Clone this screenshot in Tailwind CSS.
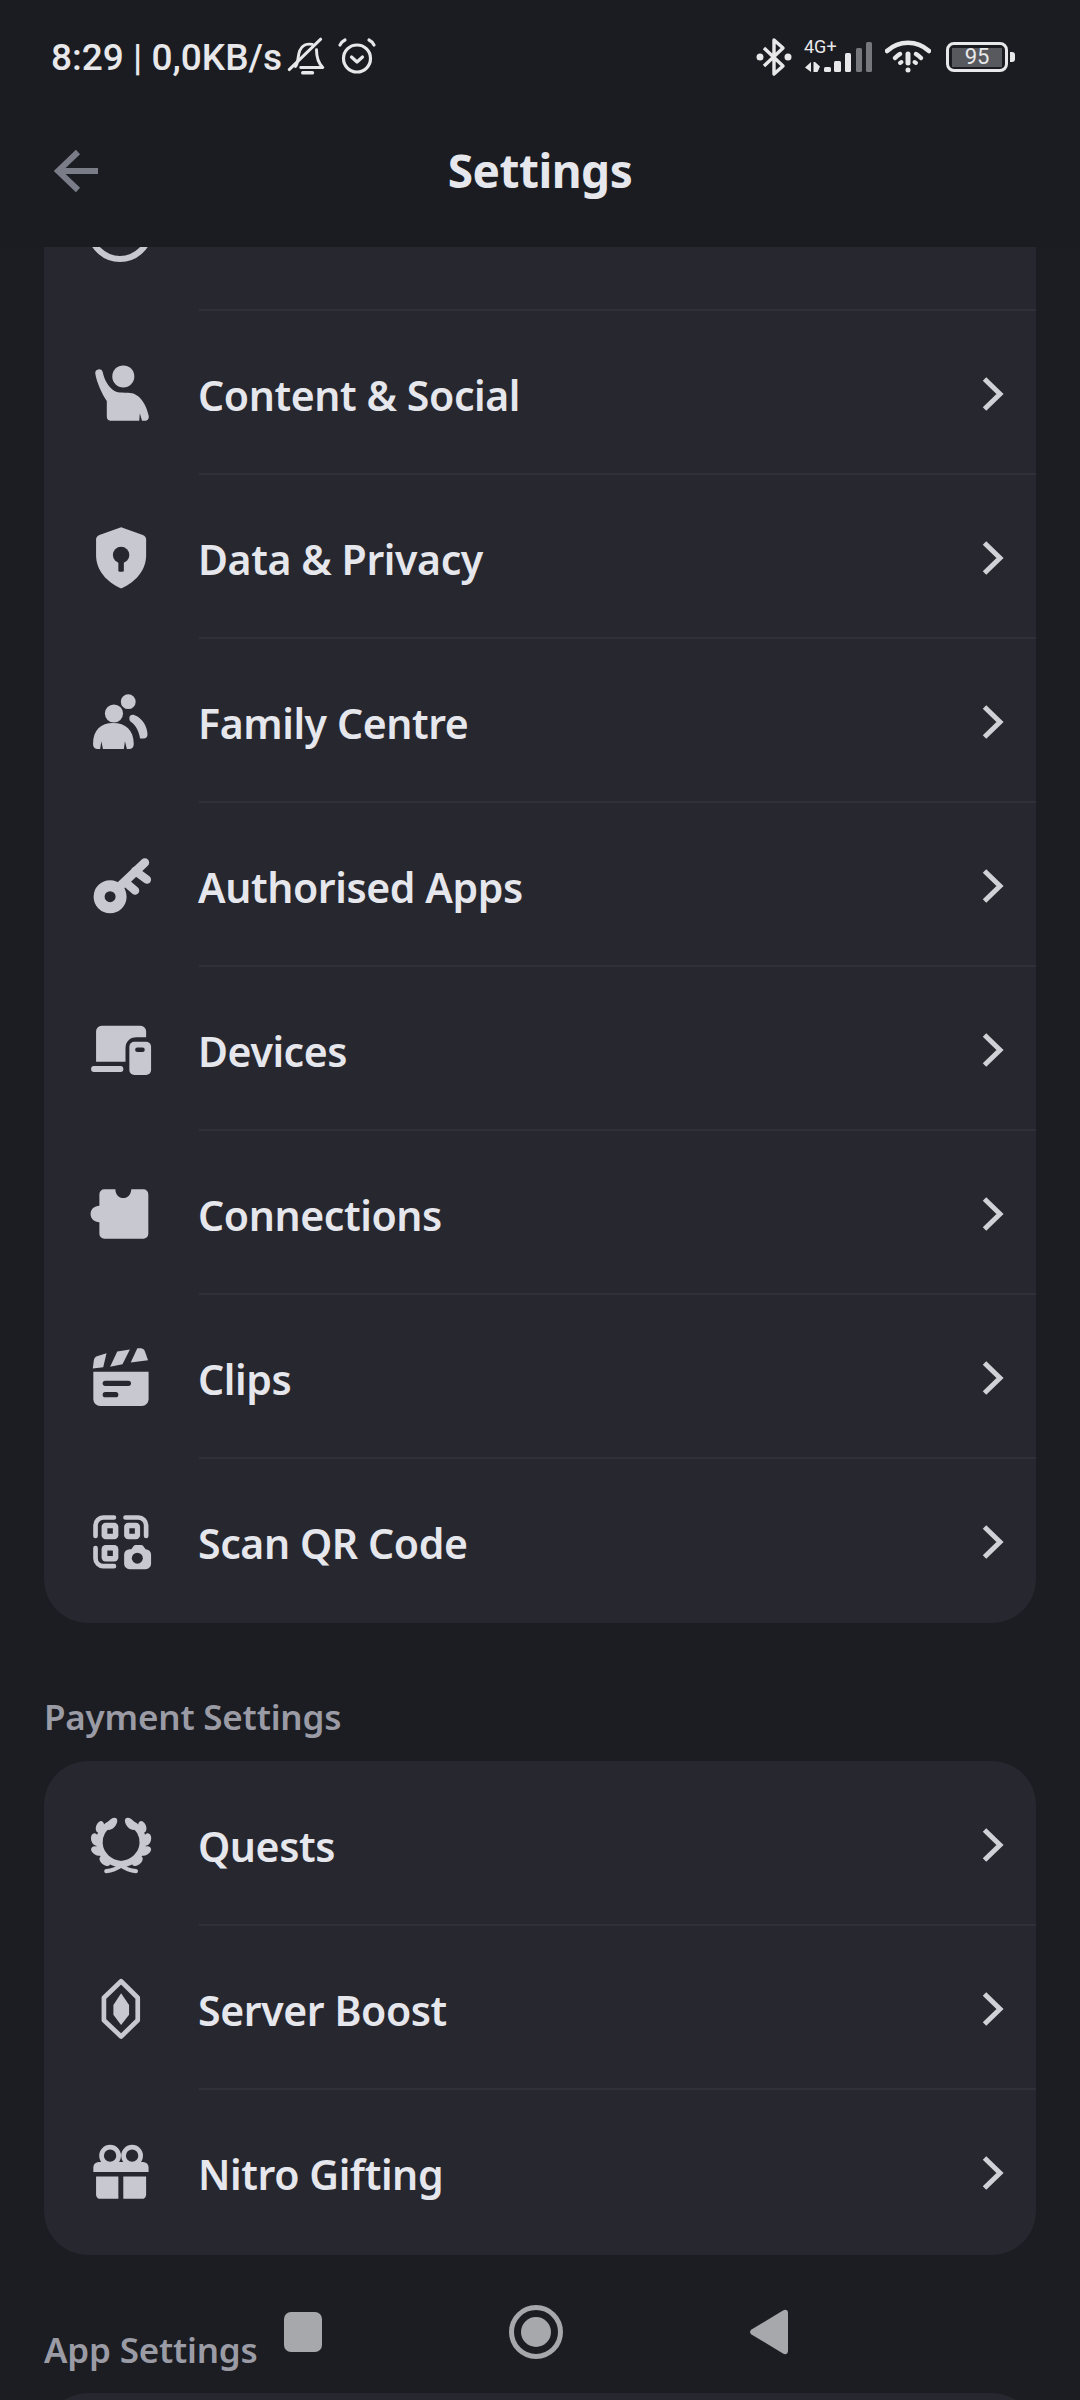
<!DOCTYPE html>
<html lang="en">
<head>
  <meta charset="UTF-8">
  <title>Settings</title>
  <script src="https://cdn.jsdelivr.net/npm/@tailwindcss/browser@4"></script>
</head>
<body class="bg-[#1c1d22] font-['Noto_Sans',sans-serif]">
<div class="relative w-[1080px] h-[2400px] overflow-hidden bg-[#1c1d22]">

  <!-- Header -->
  <header class="h-[247px] bg-[#1b1c21]">
    <!-- Status bar -->
    <div class="flex items-center h-[114px] pl-[51px] font-[Roboto,sans-serif] text-[#e8e8ea]">
      <span class="text-[37px] leading-none font-medium">8:29 | 0,0KB/s</span>
      <svg class="w-[38px] h-[42px] ml-[5px]" viewBox="0 0 36 40" fill="none" stroke="currentColor" stroke-width="2.800" stroke-linecap="round" stroke-linejoin="round">
        <path d="M2 32L32 3"/>
        <path d="M8 29C11 25 10 19 12 14C14 9 19 7 24 8"/>
        <path d="M28 13C28 19 29 25 34 30H13"/>
        <path d="M15 35H24" stroke-width="3.500"/>
      </svg>
      <svg class="w-[40px] h-[40px] ml-[12px]" viewBox="0 0 40 40" fill="none" stroke="currentColor" stroke-width="3.200" stroke-linecap="round" stroke-linejoin="round">
        <circle cx="20" cy="21.500" r="13.500"/>
        <path d="M14.500 20L20 25L25.500 20"/>
        <path d="M3 8C4 5.500 6 4 8 3"/>
        <path d="M37 8C36 5.500 34 4 32 3"/>
      </svg>
      <div class="flex items-center ml-auto mr-[65px]">
        <svg class="w-[36px] h-[40px]" viewBox="0 0 36 40" fill="none" stroke="currentColor" stroke-width="3.400" stroke-linejoin="round">
          <path d="M8 11L27 29L18 37V3L27 11L8 29"/>
          <circle cx="4" cy="20" r="3.500" fill="currentColor" stroke="none"/>
          <circle cx="32" cy="20" r="3.500" fill="currentColor" stroke="none"/>
        </svg>
        <div class="relative w-[68px] h-[32px] ml-[12px]">
          <span class="absolute left-0 -top-[3px] text-[18px] leading-[18px]">4G+</span>
          <svg class="w-[68px] h-[32px]" viewBox="0 0 68 32" fill="currentColor">
            <path d="M1 26.500L7 21V31Z"/>
            <path d="M9.500 21H11L16 25.500L13.500 31H9.500Z"/>
            <rect x="20" y="26" width="7" height="5" rx="1.500"/>
            <rect x="30" y="20" width="7" height="11" rx="1.500"/>
            <rect x="41" y="12" width="6" height="19" rx="1.500"/>
            <rect x="52" y="7" width="6" height="24" rx="1.500" fill-opacity="0.45"/>
            <rect x="62" y="1" width="6" height="30" rx="1.500" fill-opacity="0.45"/>
          </svg>
        </div>
        <svg class="w-[46px] h-[34px] ml-[13px]" viewBox="0 0 46 34" fill="none" stroke="currentColor" stroke-linecap="round">
          <path d="M2 11C14 0 32 0 44 11" stroke-width="4.500"/>
          <path d="M10 18C12 16 13 15 15 14" stroke-width="4.500"/>
          <path d="M36 18C34 16 33 15 31 14" stroke-width="4.500"/>
          <path d="M23 14V23" stroke-width="5"/>
          <circle cx="23" cy="30" r="2.500" fill="currentColor" stroke="none"/>
          <path d="M15 23L16.500 22" stroke-width="4"/>
          <path d="M31 23L29.500 22" stroke-width="4"/>
        </svg>
        <div class="flex items-center ml-[15px]">
          <div class="flex items-center justify-center w-[62px] h-[30px] p-[3px] border-[3px] border-[#e8e8ea] rounded-[8px]">
            <span class="flex items-center justify-center w-full h-[19px] bg-[#58595e] text-[22px] leading-none">95</span>
          </div>
          <div class="w-[5px] h-[10px] ml-[2px] rounded-r-[3px] bg-[#e8e8ea]"></div>
        </div>
      </div>
    </div>
    <!-- Toolbar -->
    <div class="relative flex items-center justify-center h-[112px]">
      <svg class="absolute left-[54px] top-[35px] w-[44px] h-[44px] text-[#7a7c88]" viewBox="0 0 44 44" fill="none" stroke="currentColor" stroke-width="6">
        <path d="M24 3L4 22L24 41"/>
        <path d="M4 22H44"/>
      </svg>
      <h1 class="text-[46px] leading-none font-bold tracking-[-0.5px] text-[#e6e7ec]">Settings</h1>
    </div>
  </header>

  <!-- Settings list -->
  <main class="h-[2153px] overflow-hidden px-[44px] text-[41px] font-semibold leading-none tracking-[-0.4px] text-[#e6e7ec]">

    <div class="-mt-[102px] rounded-[44px] bg-[#27272f]">
      <div class="flex items-center h-[164px] pl-[43px] pr-[31px] pt-[4px]">
        <svg class="w-[66px] h-[66px] mr-[45px] text-[#c8c9d0]" viewBox="0 0 24 24" fill="none" stroke="currentColor" stroke-width="2.200"><circle cx="12" cy="12" r="10.900"/></svg>
        <span class="pt-[3px]">Account</span>
        <svg class="w-[24px] h-[36px] ml-auto text-[#d0d1d6]" viewBox="0 0 24 36" fill="none" stroke="currentColor" stroke-width="5"><path d="M3.500 3L19 18L3.500 33"/></svg>
      </div>

      <div class="flex flex-col h-[164px]">
        <div class="ml-[155px] h-[2px] bg-[#2f3039]"></div>
        <div class="flex flex-1 items-center pl-[43px] pr-[31px] pt-[4px]">
          <svg class="w-[66px] h-[66px] mr-[45px] text-[#c8c9d0]" viewBox="0 0 24 24" fill="currentColor">
            <circle cx="13.200" cy="5.600" r="4"/>
            <path d="M3 4.500A1.400 1.400 0 0 1 5.700 3.900C6.200 6.500 7.600 9.500 10 10.900C11.500 11.600 13 11.500 15 11.500C19 11.500 21.500 15.500 22.400 19.800C22.700 21 22 21.700 21.200 21.700H20L19.200 19L19 21.700H8.500C7.500 21.700 7.200 21 7.200 20V14.500C5.500 12 3.600 8 3 4.500Z"/>
          </svg>
          <span class="pt-[3px]">Content &amp; Social</span>
          <svg class="w-[24px] h-[36px] ml-auto text-[#d0d1d6]" viewBox="0 0 24 36" fill="none" stroke="currentColor" stroke-width="5"><path d="M3.500 3L19 18L3.500 33"/></svg>
        </div>
      </div>

      <div class="flex flex-col h-[164px]">
        <div class="ml-[155px] h-[2px] bg-[#2f3039]"></div>
        <div class="flex flex-1 items-center pl-[43px] pr-[31px] pt-[4px]">
          <svg class="w-[66px] h-[66px] mr-[45px] text-[#c8c9d0]" viewBox="0 0 24 24" fill="currentColor">
            <path d="M12.400 .8L20.300 3.600C21 3.900 21.500 4.400 21.500 5.200V11C21.500 16.500 17.500 20.800 12.800 22.900C12.500 23 12.300 23 12 22.900C7.300 20.800 3.300 16.500 3.300 11V5.200C3.300 4.400 3.800 3.900 4.500 3.600Z"/>
            <circle cx="12.400" cy="10.900" r="3" fill="#27272f"/>
            <rect x="11.400" y="11" width="2" height="6" rx=".5" fill="#27272f"/>
          </svg>
          <span class="pt-[3px]">Data &amp; Privacy</span>
          <svg class="w-[24px] h-[36px] ml-auto text-[#d0d1d6]" viewBox="0 0 24 36" fill="none" stroke="currentColor" stroke-width="5"><path d="M3.500 3L19 18L3.500 33"/></svg>
        </div>
      </div>

      <div class="flex flex-col h-[164px]">
        <div class="ml-[155px] h-[2px] bg-[#2f3039]"></div>
        <div class="flex flex-1 items-center pl-[43px] pr-[31px] pt-[4px]">
          <svg class="w-[66px] h-[66px] mr-[45px] text-[#c8c9d0]" viewBox="0 0 24 24" fill="currentColor">
            <circle cx="9.800" cy="8.900" r="3.300"/>
            <circle cx="15" cy="4.600" r="2.700"/>
            <path d="M2.200 20C2.200 15 5 12.400 9.500 12.400C14 12.400 17 15 17 20C17 21 16.500 21.800 15.600 21.800H14.500L13.800 19L13.400 21.800H5.800L5.200 19L4.800 21.800H3.600C2.700 21.800 2.200 21 2.200 20Z"/>
            <path d="M15.400 10.500C15.400 9.500 16.500 9.200 17.300 9.500C20.300 10.500 22 14 22 16.500C22 17.500 21.400 18 20.600 18H19.300C18.800 15 17.500 12.800 15.800 11.800C15.500 11.500 15.400 11 15.400 10.500Z"/>
          </svg>
          <span class="pt-[3px]">Family Centre</span>
          <svg class="w-[24px] h-[36px] ml-auto text-[#d0d1d6]" viewBox="0 0 24 36" fill="none" stroke="currentColor" stroke-width="5"><path d="M3.500 3L19 18L3.500 33"/></svg>
        </div>
      </div>

      <div class="flex flex-col h-[164px]">
        <div class="ml-[155px] h-[2px] bg-[#2f3039]"></div>
        <div class="flex flex-1 items-center pl-[43px] pr-[31px] pt-[4px]">
          <svg class="w-[66px] h-[66px] mr-[45px] text-[#c8c9d0]" viewBox="0 0 24 24" fill="none" stroke="currentColor" stroke-linecap="round">
            <circle cx="8.400" cy="15.900" r="4" stroke-width="4"/>
            <path d="M11 13L21 3.500" stroke-width="3.200"/>
            <path d="M17.500 6.500L21.800 9.700" stroke-width="3"/>
            <path d="M13.800 10.500L17.500 13.700" stroke-width="3"/>
          </svg>
          <span class="pt-[3px]">Authorised Apps</span>
          <svg class="w-[24px] h-[36px] ml-auto text-[#d0d1d6]" viewBox="0 0 24 36" fill="none" stroke="currentColor" stroke-width="5"><path d="M3.500 3L19 18L3.500 33"/></svg>
        </div>
      </div>

      <div class="flex flex-col h-[164px]">
        <div class="ml-[155px] h-[2px] bg-[#2f3039]"></div>
        <div class="flex flex-1 items-center pl-[43px] pr-[31px] pt-[4px]">
          <svg class="w-[66px] h-[66px] mr-[45px] text-[#c8c9d0]" viewBox="0 0 24 24" fill="currentColor">
            <path d="M3.300 5.200A2 2 0 0 1 5.300 3.200H19.500A2 2 0 0 1 21.500 5.200V7.400H18C15.500 7.400 14 9.100 14 11.400V16.300H3.300Z"/>
            <rect x="1.500" y="17.800" width="11.700" height="2.200" rx="1"/>
            <rect x="15.400" y="9" width="7.900" height="12.100" rx="1.800"/>
            <rect x="17.500" y="11.100" width="3.500" height="1.600" rx=".8" fill="#27272f"/>
          </svg>
          <span class="pt-[3px]">Devices</span>
          <svg class="w-[24px] h-[36px] ml-auto text-[#d0d1d6]" viewBox="0 0 24 36" fill="none" stroke="currentColor" stroke-width="5"><path d="M3.500 3L19 18L3.500 33"/></svg>
        </div>
      </div>

      <div class="flex flex-col h-[164px]">
        <div class="ml-[155px] h-[2px] bg-[#2f3039]"></div>
        <div class="flex flex-1 items-center pl-[43px] pr-[31px] pt-[4px]">
          <svg class="w-[66px] h-[66px] mr-[45px] text-[#c8c9d0]" viewBox="0 0 24 24" fill="currentColor">
            <path d="M6.300 3H10.300C10.400 5 11.600 6.200 13.200 6.200C14.800 6.200 16 5 16.100 3H20.500A1.800 1.800 0 0 1 22.300 4.800V19.200A1.800 1.800 0 0 1 20.500 21H6.300A1.800 1.800 0 0 1 4.500 19.200V15C2.700 15 1.300 13.700 1.300 12C1.300 10.300 2.700 9 4.500 9V4.800A1.800 1.800 0 0 1 6.300 3Z"/>
          </svg>
          <span class="pt-[3px]">Connections</span>
          <svg class="w-[24px] h-[36px] ml-auto text-[#d0d1d6]" viewBox="0 0 24 36" fill="none" stroke="currentColor" stroke-width="5"><path d="M3.500 3L19 18L3.500 33"/></svg>
        </div>
      </div>

      <div class="flex flex-col h-[164px]">
        <div class="ml-[155px] h-[2px] bg-[#2f3039]"></div>
        <div class="flex flex-1 items-center pl-[43px] pr-[31px] pt-[4px]">
          <svg class="w-[66px] h-[66px] mr-[45px] text-[#c8c9d0]" viewBox="0 0 24 24" fill="currentColor">
            <path d="M2.300 9.700H22.400V19.700A2.500 2.500 0 0 1 19.900 22.200H4.800A2.500 2.500 0 0 1 2.300 19.700Z"/>
            <rect x="5.700" y="13" width="10.300" height="1.900" rx=".95" fill="#27272f"/>
            <rect x="5.700" y="17.100" width="5.700" height="1.900" rx=".95" fill="#27272f"/>
            <path d="M2.100 8.500L2.500 5.500C2.600 4.700 3.100 4.200 3.900 4L7.100 3L5.900 8.100Z"/>
            <path d="M8.400 7.900L11 2.400L15.600 1.600L12.900 7Z"/>
            <path d="M15.900 6.400L18.300 1.200H19.500C20.200 1.200 20.700 1.500 21 2.200L22.200 5.500Z"/>
          </svg>
          <span class="pt-[3px]">Clips</span>
          <svg class="w-[24px] h-[36px] ml-auto text-[#d0d1d6]" viewBox="0 0 24 36" fill="none" stroke="currentColor" stroke-width="5"><path d="M3.500 3L19 18L3.500 33"/></svg>
        </div>
      </div>

      <div class="flex flex-col h-[166px]">
        <div class="ml-[155px] h-[2px] bg-[#2f3039]"></div>
        <div class="flex flex-1 items-center pl-[43px] pr-[31px] pt-[4px] pb-[2px]">
          <svg class="w-[66px] h-[66px] mr-[45px] text-[#c8c9d0]" viewBox="0 0 24 24" fill="currentColor">
            <path d="M3.100 9.800V5.900A2.800 2.800 0 0 1 5.900 3.100H9.800" fill="none" stroke="currentColor" stroke-width="1.700" stroke-linecap="round"/>
            <path d="M14 3.100H18.700A2.800 2.800 0 0 1 21.500 5.900V9.800" fill="none" stroke="currentColor" stroke-width="1.700" stroke-linecap="round"/>
            <path d="M3.100 14.200V18A2.800 2.800 0 0 0 5.900 20.800H9.800" fill="none" stroke="currentColor" stroke-width="1.700" stroke-linecap="round"/>
            <rect x="5.300" y="5" width="6.100" height="6" rx="1.500"/>
            <rect x="13.500" y="5" width="5.800" height="6" rx="1.500"/>
            <rect x="5.300" y="13.100" width="6.100" height="6" rx="1.500"/>
            <rect x="7.400" y="7" width="2" height="2" fill="#27272f"/>
            <rect x="15.400" y="7" width="2" height="2" fill="#27272f"/>
            <rect x="7.400" y="15.100" width="2" height="2" fill="#27272f"/>
            <path d="M13.500 16.600A2 2 0 0 1 15.500 14.600H16.100L16.900 13.500A1 1 0 0 1 17.700 13.100H19.700A1 1 0 0 1 20.500 13.500L21.300 14.600A2 2 0 0 1 23.300 16.600V19.900A2 2 0 0 1 21.300 21.900H15.500A2 2 0 0 1 13.500 19.900Z"/>
            <circle cx="18.300" cy="17.900" r="2" fill="#27272f"/>
          </svg>
          <span class="pt-[3px]">Scan QR Code</span>
          <svg class="w-[24px] h-[36px] ml-auto text-[#d0d1d6]" viewBox="0 0 24 36" fill="none" stroke="currentColor" stroke-width="5"><path d="M3.500 3L19 18L3.500 33"/></svg>
        </div>
      </div>
    </div>

    <h2 class="mt-[70px] mb-[20px] text-[35px] leading-[48px] font-semibold tracking-[-0.2px] text-[#9a9ba5]">Payment Settings</h2>

    <div class="rounded-[44px] bg-[#27272f]">
      <div class="flex items-center h-[163px] pl-[43px] pr-[31px] pt-[4px]">
        <svg class="w-[66px] h-[66px] mr-[45px] text-[#c8c9d0]" viewBox="0 0 24 24" fill="currentColor">
          <g>
            <path d="M10 3.800C5.500 5 4.300 9 4.500 11.500C4.800 15.500 8 18.500 12.400 19" fill="none" stroke="currentColor" stroke-width="2.400"/>
            <ellipse cx="9" cy="4.300" rx="2.600" ry="1.500" transform="rotate(-50 9 4.300)"/>
            <ellipse cx="4.700" cy="5.400" rx="2.200" ry="1.400" transform="rotate(-70 4.700 5.400)"/>
            <ellipse cx="3" cy="10" rx="2.300" ry="1.500" transform="rotate(75 3 10)"/>
            <ellipse cx="3.600" cy="14.200" rx="2.300" ry="1.500" transform="rotate(30 3.600 14.200)"/>
            <ellipse cx="6.500" cy="17.800" rx="2.300" ry="1.400" transform="rotate(40 6.500 17.800)"/>
            <path d="M7 21.500C9 21.300 11 20.500 12.400 19.500" fill="none" stroke="currentColor" stroke-width="1.500" stroke-linecap="round"/>
          </g>
          <g transform="translate(24.800 0) scale(-1 1)">
            <path d="M10 3.800C5.500 5 4.300 9 4.500 11.500C4.800 15.500 8 18.500 12.400 19" fill="none" stroke="currentColor" stroke-width="2.400"/>
            <ellipse cx="9" cy="4.300" rx="2.600" ry="1.500" transform="rotate(-50 9 4.300)"/>
            <ellipse cx="4.700" cy="5.400" rx="2.200" ry="1.400" transform="rotate(-70 4.700 5.400)"/>
            <ellipse cx="3" cy="10" rx="2.300" ry="1.500" transform="rotate(75 3 10)"/>
            <ellipse cx="3.600" cy="14.200" rx="2.300" ry="1.500" transform="rotate(30 3.600 14.200)"/>
            <ellipse cx="6.500" cy="17.800" rx="2.300" ry="1.400" transform="rotate(40 6.500 17.800)"/>
            <path d="M7 21.500C9 21.300 11 20.500 12.400 19.500" fill="none" stroke="currentColor" stroke-width="1.500" stroke-linecap="round"/>
          </g>
        </svg>
        <span class="pt-[3px]">Quests</span>
        <svg class="w-[24px] h-[36px] ml-auto text-[#d0d1d6]" viewBox="0 0 24 36" fill="none" stroke="currentColor" stroke-width="5"><path d="M3.500 3L19 18L3.500 33"/></svg>
      </div>

      <div class="flex flex-col h-[164px]">
        <div class="ml-[155px] h-[2px] bg-[#2f3039]"></div>
        <div class="flex flex-1 items-center pl-[43px] pr-[31px] pt-[4px]">
          <svg class="w-[66px] h-[66px] mr-[45px] text-[#c8c9d0]" viewBox="0 0 24 24" fill="currentColor">
            <path d="M12.400 1.900L18.450 7.900V16.100L12.400 22L6.150 16.100V7.900Z" fill="none" stroke="currentColor" stroke-width="1.700" stroke-linejoin="round"/>
            <path d="M12.400 6.300L15.300 10.500V14.100L12.400 17.800L9.600 14.100V10.500Z"/>
          </svg>
          <span class="pt-[3px]">Server Boost</span>
          <svg class="w-[24px] h-[36px] ml-auto text-[#d0d1d6]" viewBox="0 0 24 36" fill="none" stroke="currentColor" stroke-width="5"><path d="M3.500 3L19 18L3.500 33"/></svg>
        </div>
      </div>

      <div class="flex flex-col h-[167px]">
        <div class="ml-[155px] h-[2px] bg-[#2f3039]"></div>
        <div class="flex flex-1 items-center pl-[43px] pr-[31px] pt-[4px] pb-[3px]">
          <svg class="w-[66px] h-[66px] mr-[45px] text-[#c8c9d0]" viewBox="0 0 24 24" fill="currentColor">
            <circle cx="8.400" cy="5.700" r="3.100" fill="none" stroke="currentColor" stroke-width="1.700"/>
            <circle cx="16.400" cy="5.700" r="3.100" fill="none" stroke="currentColor" stroke-width="1.700"/>
            <path d="M4.300 8H20.400A2 2 0 0 1 22.400 10V11.600H2.300V10A2 2 0 0 1 4.300 8Z"/>
            <path d="M3.300 13.300H11.400V21.400H4.800A1.500 1.500 0 0 1 3.300 19.900Z"/>
            <path d="M13.200 13.300H21.500V19.900A1.500 1.500 0 0 1 20 21.400H13.200Z"/>
          </svg>
          <span class="pt-[3px]">Nitro Gifting</span>
          <svg class="w-[24px] h-[36px] ml-auto text-[#d0d1d6]" viewBox="0 0 24 36" fill="none" stroke="currentColor" stroke-width="5"><path d="M3.500 3L19 18L3.500 33"/></svg>
        </div>
      </div>
    </div>

    <h2 class="mt-[71px] mb-[19px] text-[35px] leading-[48px] font-semibold tracking-[-0.2px] text-[#9a9ba5]">App Settings</h2>

    <div class="h-[200px] rounded-[44px] bg-[#27272f]"></div>
  </main>

  <!-- Navigation bar, over the list -->
  <nav class="absolute left-0 top-[2305px] flex items-center w-full h-[54px] pl-[284px] text-[#a7a8ab]">
    <div class="w-[38px] h-[40px] rounded-[7px] bg-[#a7a8ab]"></div>
    <svg class="w-[54px] h-[54px] ml-[187px]" viewBox="0 0 54 54">
      <circle cx="27" cy="27" r="24.500" fill="none" stroke="currentColor" stroke-width="5"/>
      <circle cx="27" cy="27" r="15" fill="currentColor"/>
    </svg>
    <svg class="w-[38px] h-[46px] ml-[187px]" viewBox="0 0 38 46" fill="currentColor">
      <path d="M1.500 20.500L33 1.500C35.500 0 38 1 38 4V42C38 45 35.500 46 33 44.500L1.500 25.500C-.5 24 -.5 22 1.500 20.500Z"/>
    </svg>
  </nav>
</div>
</body>
</html>
